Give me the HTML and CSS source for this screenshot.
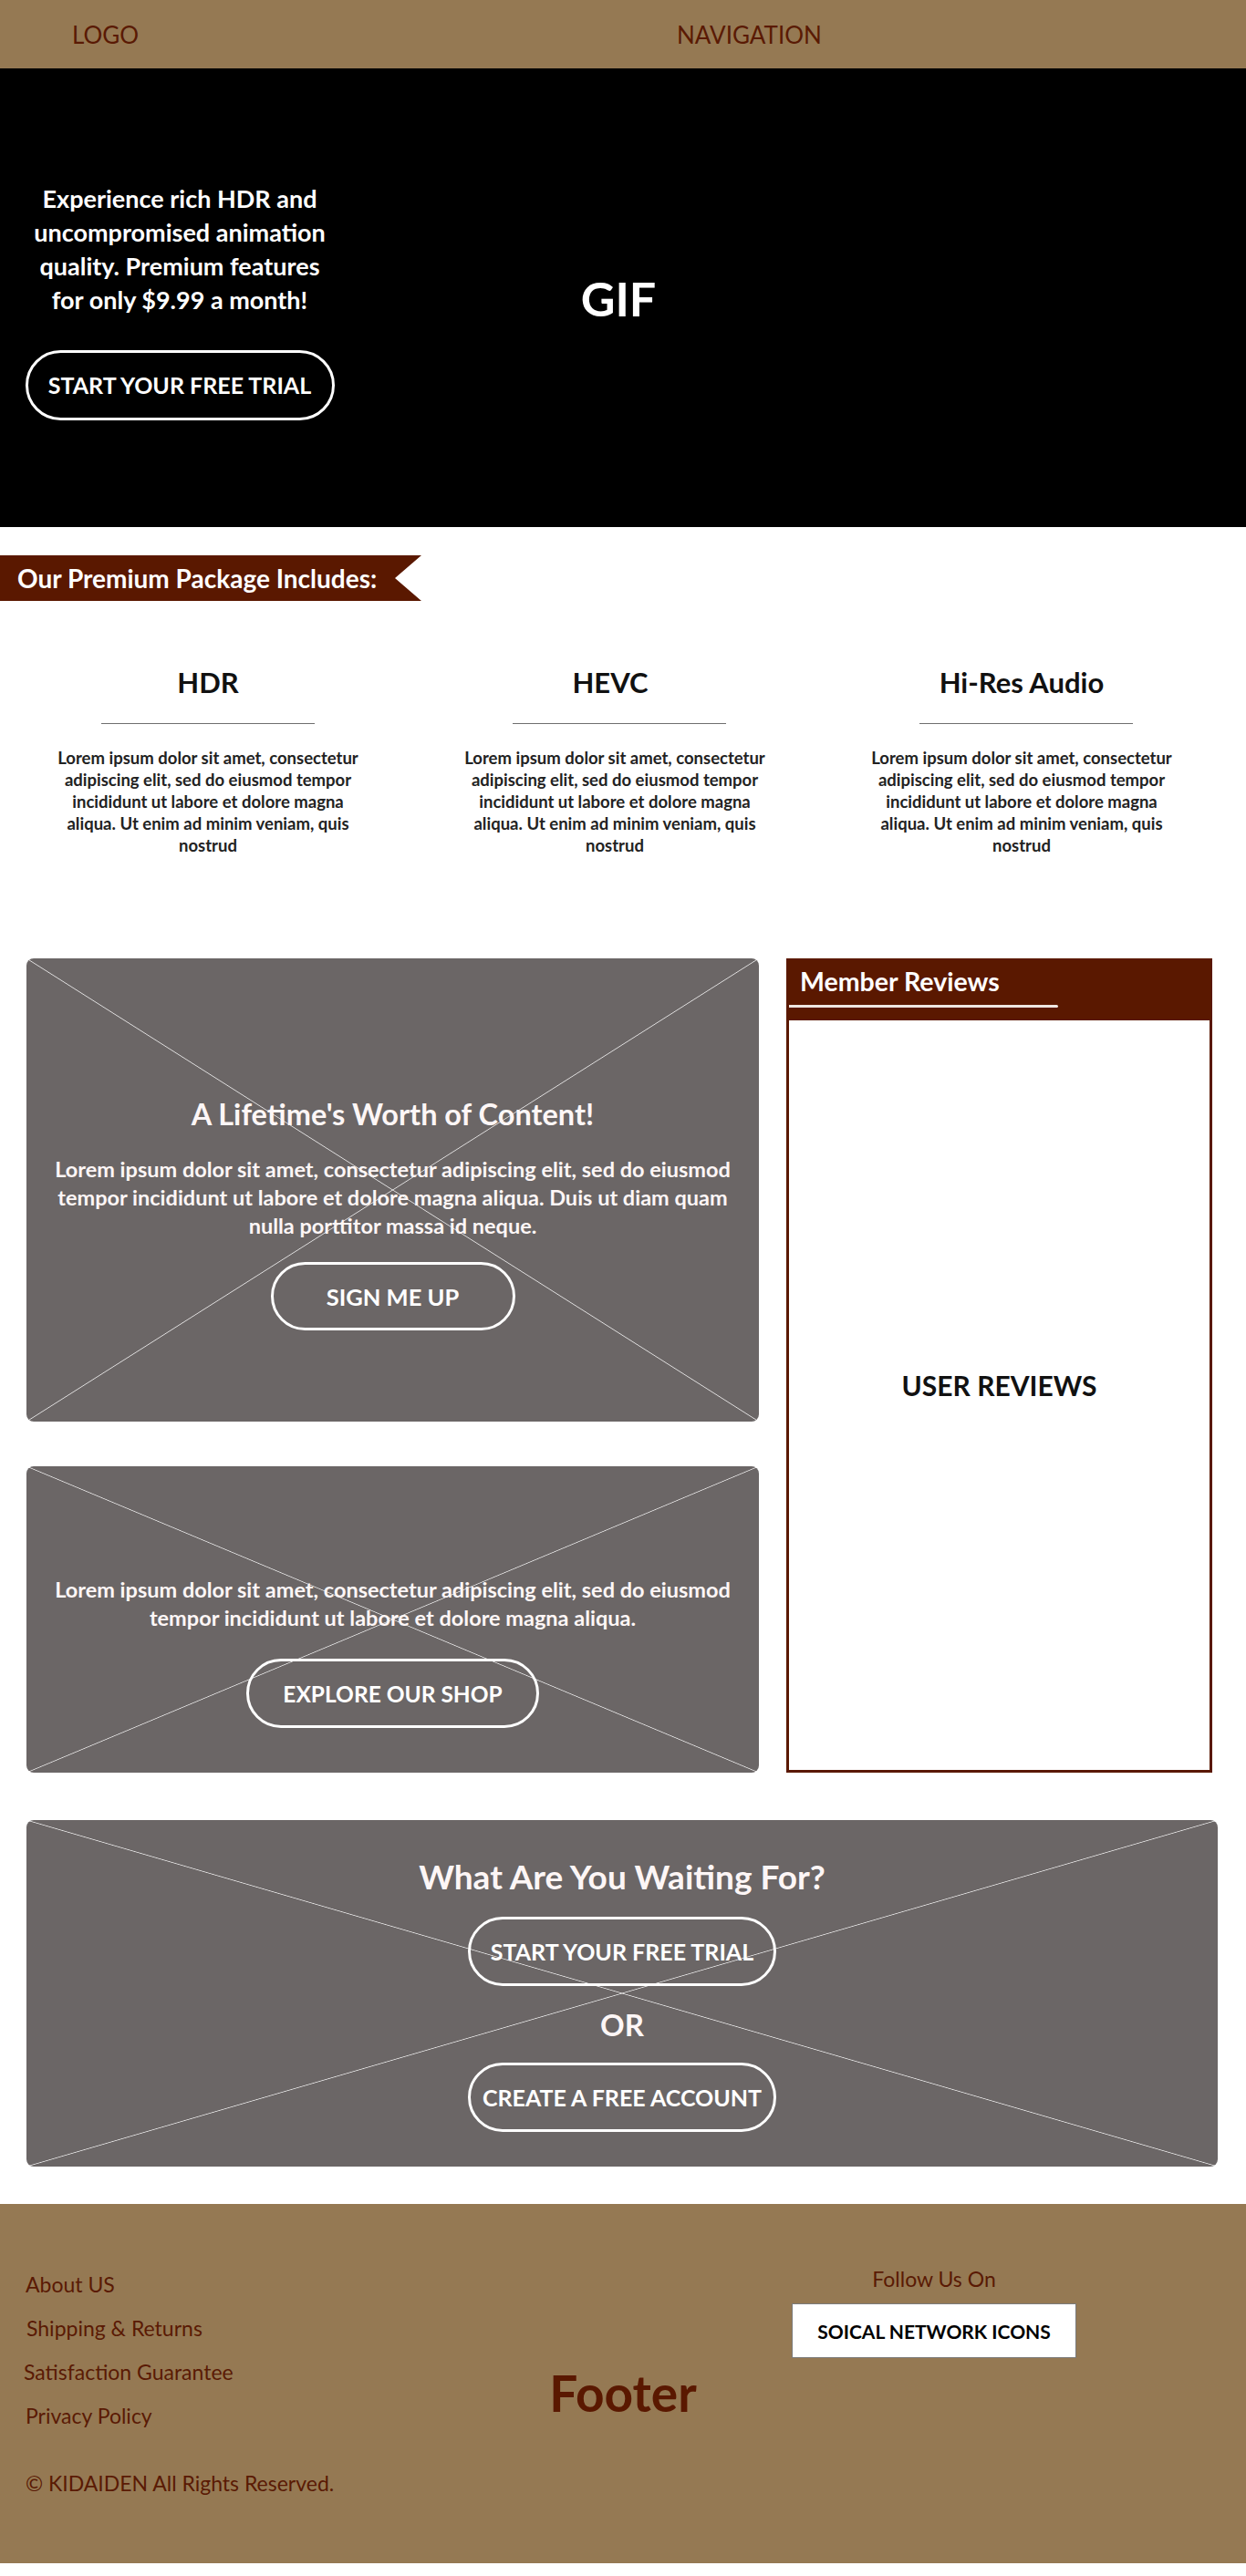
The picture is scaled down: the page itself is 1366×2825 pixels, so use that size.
FILE: index.html
```html
<!DOCTYPE html>
<html lang="en">
<head>
<meta charset="utf-8">
<title>KIDAIDEN Premium</title>
<link rel="stylesheet" href="styles.css">
</head>
<body>
<header class="topbar">
  <div class="logo">LOGO</div>
  <nav class="nav">NAVIGATION</nav>
</header>

<section class="hero">
  <div class="hero-copy">
    <p>Experience rich HDR and<br>uncompromised animation<br>quality. Premium features<br>for only $9.99 a month!</p>
    <a class="btn btn-hero" href="#">START YOUR FREE TRIAL</a>
  </div>
  <div class="hero-media">GIF</div>
</section>

<div class="ribbon">Our Premium Package Includes:</div>

<section class="features">
  <div class="feature">
    <h3>HDR</h3>
    <hr>
    <p>Lorem ipsum dolor sit amet, consectetur adipiscing elit, sed do eiusmod tempor incididunt ut labore et dolore magna aliqua. Ut enim ad minim veniam, quis nostrud</p>
  </div>
  <div class="feature f2">
    <h3>HEVC</h3>
    <hr>
    <p>Lorem ipsum dolor sit amet, consectetur adipiscing elit, sed do eiusmod tempor incididunt ut labore et dolore magna aliqua. Ut enim ad minim veniam, quis nostrud</p>
  </div>
  <div class="feature f3">
    <h3>Hi-Res Audio</h3>
    <hr>
    <p>Lorem ipsum dolor sit amet, consectetur adipiscing elit, sed do eiusmod tempor incididunt ut labore et dolore magna aliqua. Ut enim ad minim veniam, quis nostrud</p>
  </div>
</section>

<section class="main-row">
  <div class="cards">
    <article class="card card-content">
      <h2>A Lifetime's Worth of Content!</h2>
      <p>Lorem ipsum dolor sit amet, consectetur adipiscing elit, sed do eiusmod tempor incididunt ut labore et dolore magna aliqua. Duis ut diam quam nulla porttitor massa id neque.</p>
      <a class="btn btn-sign" href="#">SIGN ME UP</a>
    </article>
    <article class="card card-shop">
      <p>Lorem ipsum dolor sit amet, consectetur adipiscing elit, sed do eiusmod tempor incididunt ut labore et dolore magna aliqua.</p>
      <a class="btn btn-shop" href="#">EXPLORE OUR SHOP</a>
    </article>
  </div>
  <aside class="reviews">
    <div class="reviews-head">
      <h3>Member Reviews</h3>
      <span class="reviews-rule"></span>
    </div>
    <div class="reviews-body">USER REVIEWS</div>
  </aside>
</section>

<section class="card cta">
  <h2>What Are You Waiting For?</h2>
  <a class="btn btn-cta" href="#">START YOUR FREE TRIAL</a>
  <div class="or">OR</div>
  <a class="btn btn-cta btn-cta2" href="#">CREATE A FREE ACCOUNT</a>
</section>

<footer class="footer">
  <div class="footer-left">
    <ul class="footer-links">
      <li><a href="#">About US</a></li>
      <li><a href="#" class="l2">Shipping &amp; Returns</a></li>
      <li><a href="#" class="l3">Satisfaction Guarantee</a></li>
      <li><a href="#">Privacy Policy</a></li>
    </ul>
    <p class="copyright">© KIDAIDEN All Rights Reserved.</p>
  </div>
  <div class="footer-center">Footer</div>
  <div class="footer-right">
    <div class="follow">
      <span class="follow-title">Follow Us On</span>
      <div class="social-box">SOICAL NETWORK ICONS</div>
    </div>
  </div>
</footer>
</body>
</html>
```

FILE: styles.css
```css
* { box-sizing: border-box; }

html, body {
  margin: 0;
  padding: 0;
}

body {
  font-family: Lato, "Open Sans", "Liberation Sans", sans-serif;
  background: #ffffff;
  color: #111;
  padding-bottom: 13px;
}

/* ---------- top bar ---------- */
.topbar {
  height: 75px;
  background: #957953;
  display: flex;
  align-items: center;
  padding-left: 79px;
  color: #5a1a04;
  font-size: 26px;
}
.logo { width: 663px; }

/* ---------- hero ---------- */
.hero {
  height: 503px;
  background: #000;
  display: grid;
  grid-template-columns: 394px 1fr 404px;
  align-items: center;
}
.hero-copy {
  display: flex;
  flex-direction: column;
  align-items: center;
  padding-top: 6px;
}
.hero-copy p {
  margin: 0;
  color: #fff;
  font-weight: 700;
  font-size: 27px;
  line-height: 37px;
  text-align: center;
}
.hero-media {
  text-align: center;
  color: #fff;
  font-weight: 700;
  font-size: 52px;
}

.btn {
  display: inline-flex;
  align-items: center;
  justify-content: center;
  border: 3px solid #fff;
  border-radius: 40px;
  color: #fff;
  font-weight: 700;
  text-decoration: none;
  white-space: nowrap;
}
.btn-hero {
  margin-top: 37px;
  width: 339px;
  height: 77px;
  font-size: 25px;
}

/* ---------- ribbon ---------- */
.ribbon {
  margin-top: 31px;
  width: 462px;
  height: 50px;
  background: #5a1800;
  clip-path: polygon(0 0, 100% 0, 433px 50%, 100% 100%, 0 100%);
  display: flex;
  align-items: center;
  padding-left: 19px;
  color: #fff;
  font-weight: 700;
  font-size: 28px;
}

/* ---------- features ---------- */
.features {
  display: grid;
  grid-template-columns: repeat(3, 446px);
  padding-left: 5px;
  padding-top: 71px;
}
.feature {
  display: flex;
  flex-direction: column;
  align-items: center;
}
.feature h3 {
  margin: 0;
  font-size: 31px;
  line-height: 37px;
  font-weight: 700;
  color: #111;
}
.feature.f2 h3 { margin-left: -10px; }
.feature hr {
  margin: 26px 0 0;
  width: 234px;
  border: 0;
  border-top: 1px solid #6f6f6f;
  height: 0;
}
.feature.f2 hr { margin-left: 10px; }
.feature.f3 hr { margin-left: 10px; }
.feature p {
  margin: 25px 0 0;
  max-width: 338px;
  text-align: center;
  font-weight: 700;
  font-size: 18.5px;
  line-height: 24px;
  color: #222;
}

/* ---------- cards & reviews ---------- */
.main-row {
  margin-top: 112px;
  display: grid;
  grid-template-columns: 803px 467px;
  column-gap: 30px;
  padding-left: 29px;
}
.cards {
  display: flex;
  flex-direction: column;
  gap: 49px;
}

.card {
  background-color: #6b6666;
  background-image:
    linear-gradient(to top right, transparent calc(50% - 0.8px), rgba(255,255,255,0.8) 50%, transparent calc(50% + 0.8px)),
    linear-gradient(to bottom right, transparent calc(50% - 0.8px), rgba(255,255,255,0.8) 50%, transparent calc(50% + 0.8px));
  border-radius: 8px;
  display: flex;
  flex-direction: column;
  align-items: center;
  color: #fdf6f6;
  text-align: center;
}
.card h2 {
  margin: 0;
  font-weight: 700;
}
.card p {
  margin: 0;
  font-weight: 700;
  font-size: 23.5px;
  line-height: 31px;
}

.card-content {
  height: 508px;
  padding: 152px 24px 0;
}
.card-content h2 {
  font-size: 32.5px;
  line-height: 38px;
}
.card-content p { margin-top: 26px; }
.btn-sign {
  margin-top: 24px;
  width: 268px;
  height: 75px;
  font-size: 25.5px;
}

.card-shop {
  height: 336px;
  padding: 120px 24px 0;
}
.btn-shop {
  margin-top: 29px;
  width: 321px;
  height: 76px;
  font-size: 24.5px;
}

.reviews {
  border: 3px solid #5a1800;
  display: flex;
  flex-direction: column;
  background: #fff;
}
.reviews-head {
  background: #5a1800;
  height: 65px;
  padding-top: 5px;
  display: flex;
  flex-direction: column;
}
.reviews-head h3 {
  margin: 0 0 0 12px;
  color: #fff;
  font-size: 28.5px;
  line-height: 34px;
  font-weight: 700;
}
.reviews-rule {
  display: block;
  margin-top: 9px;
  width: 295px;
  height: 3px;
  background: #efe6e2;
  border-radius: 0 2px 2px 0;
}
.reviews-body {
  flex: 1;
  display: flex;
  align-items: center;
  justify-content: center;
  padding-bottom: 22px;
  font-size: 30px;
  font-weight: 700;
  color: #111;
}

/* ---------- CTA ---------- */
.cta {
  margin: 52px 0 0 29px;
  width: 1306px;
  height: 380px;
  padding-top: 40px;
}
.cta h2 {
  font-size: 37px;
  line-height: 44px;
}
.btn-cta {
  margin-top: 22px;
  width: 338px;
  height: 76px;
  font-size: 25px;
}
.or {
  margin-top: 22px;
  font-size: 33px;
  line-height: 40px;
  font-weight: 700;
}
.btn-cta2 { margin-top: 22px; }

/* ---------- footer ---------- */
.footer {
  margin-top: 41px;
  height: 394px;
  background: #957953;
  display: grid;
  grid-template-columns: 560px 246px 1fr;
  color: #5a1a04;
}
.footer-left {
  padding: 64px 0 0 28px;
}
.footer-links {
  list-style: none;
  margin: 0;
  padding: 0;
}
.footer-links li {
  font-size: 23px;
  line-height: 48px;
}
.footer-links a {
  color: #5a1a04;
  text-decoration: none;
}
.footer-links a.l2 { margin-left: 1px; }
.footer-links a.l3 { margin-left: -2px; }
.copyright {
  margin: 26px 0 0;
  font-size: 23px;
  line-height: 48px;
}
.footer-center {
  padding-top: 174px;
  text-align: center;
  font-size: 55px;
  line-height: 66px;
  font-weight: 700;
  color: #5a1800;
}
.footer-right {
  padding: 68px 0 0 62px;
}
.follow {
  display: inline-flex;
  flex-direction: column;
  align-items: center;
}
.follow-title {
  font-size: 23px;
  line-height: 28px;
}
.social-box {
  margin-top: 13px;
  width: 312px;
  height: 60px;
  background: #fff;
  border: 1px solid #7a7a7a;
  display: flex;
  align-items: center;
  justify-content: center;
  color: #000;
  font-size: 21px;
  font-weight: 700;
}
```
